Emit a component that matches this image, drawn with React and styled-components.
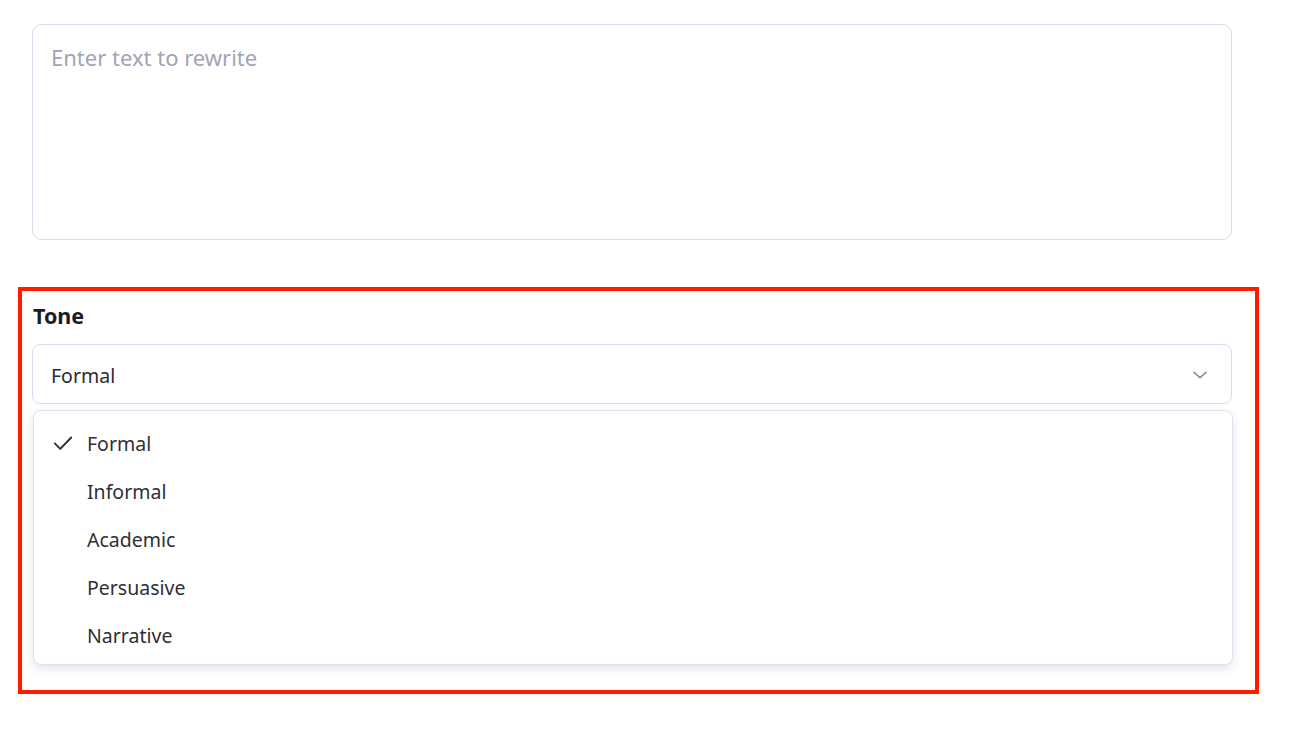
import React, { useState } from "react";
import styled, { createGlobalStyle } from "styled-components";

const Global = createGlobalStyle`
  html, body { margin: 0; padding: 0; background: #ffffff; }
  body { font-family: "Noto Sans", "Open Sans", sans-serif; }
  * { box-sizing: border-box; }
`;

const Page = styled.div`
  width: 1289px;
  height: 745px;
  padding: 24px 0 0 32px;
  display: flex;
  flex-direction: column;
`;

const TextArea = styled.textarea`
  width: 1200px;
  height: 216px;
  border: 1px solid #dcdaee;
  border-radius: 10px;
  padding: 17px 18px;
  font-family: inherit;
  font-size: 22px;
  line-height: 30px;
  color: #333;
  resize: none;
  outline: none;
  background: #fff;
  &::placeholder { color: #a3a3b5; }
`;

const Section = styled.section`
  position: relative;
  width: 1201px;
  margin-top: 61px;
  display: flex;
  flex-direction: column;
  &::after {
    content: "";
    position: absolute;
    left: -14px;
    right: -26px;
    top: -14px;
    bottom: -29px;
    border: 4px solid #ff1a00;
    pointer-events: none;
  }
`;

const Label = styled.label`
  font-size: 21.5px;
  font-weight: 700;
  line-height: 30px;
  color: #1c1c22;
  padding-left: 1px;
`;

const Trigger = styled.button`
  margin-top: 13px;
  width: 1200px;
  height: 60px;
  border: 1px solid #dcdaee;
  border-radius: 8px;
  background: #fff;
  display: flex;
  align-items: center;
  justify-content: space-between;
  padding: 2px 22px 0 18px;
  font-family: inherit;
  font-size: 19.5px;
  color: #2a2a30;
  cursor: pointer;
`;

const Menu = styled.ul`
  list-style: none;
  margin: 6px 0 0 1px;
  padding: 8px 0 5px;
  width: 1200px;
  border: 1px solid #e2e0f0;
  border-radius: 8px;
  background: #fff;
  box-shadow: 0 4px 10px rgba(40, 40, 70, 0.12);
`;

const Item = styled.li`
  height: 48px;
  display: flex;
  align-items: center;
  padding-left: 18px;
  font-size: 19.5px;
  color: #2f2f35;
  cursor: pointer;
`;

const CheckSlot = styled.span`
  width: 35px;
  display: flex;
  align-items: center;
  color: #2a2a2e;
`;

const Check = () => (
  <svg width="22" height="22" viewBox="0 0 24 24" fill="none" stroke="currentColor" strokeWidth="2" strokeLinecap="round" strokeLinejoin="round">
    <path d="M3 12.5l6 6L21 6" />
  </svg>
);

const Chevron = () => (
  <svg width="18" height="18" viewBox="0 0 24 24" fill="none" stroke="#8a8a90" strokeWidth="2" strokeLinecap="round" strokeLinejoin="round">
    <path d="M4 8.5l8 7 8-7" />
  </svg>
);

const tones = ["Formal", "Informal", "Academic", "Persuasive", "Narrative"];

export default function App() {
  const [tone, setTone] = useState("Formal");
  return (
    <>
      <Global />
      <Page>
        <TextArea placeholder="Enter text to rewrite" />
        <Section>
          <Label>Tone</Label>
          <Trigger>
            <span>{tone}</span>
            <Chevron />
          </Trigger>
          <Menu>
            {tones.map((t) => (
              <Item key={t} onClick={() => setTone(t)}>
                <CheckSlot>{t === tone ? <Check /> : null}</CheckSlot>
                {t}
              </Item>
            ))}
          </Menu>
        </Section>
      </Page>
    </>
  );
}
